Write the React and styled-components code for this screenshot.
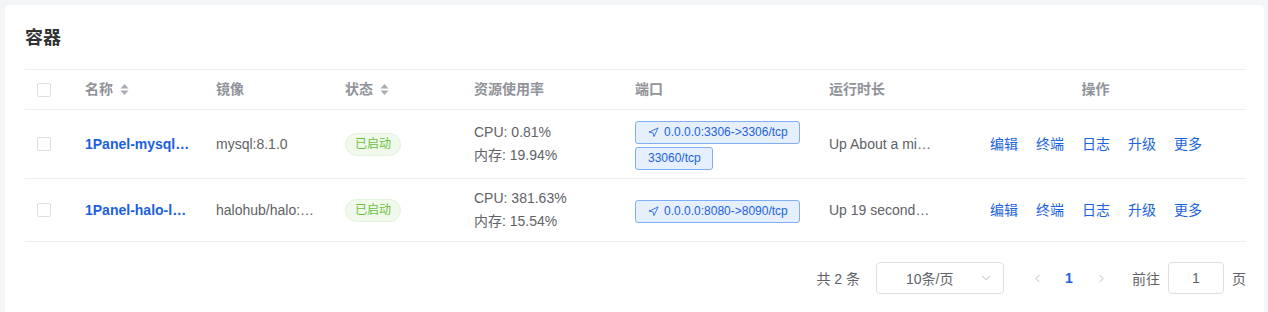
import styled, { createGlobalStyle } from 'styled-components';
import { ChevronDown, ChevronLeft, ChevronRight, Navigation } from 'lucide-react';

const GlobalStyle = createGlobalStyle`
  html, body {
    margin: 0;
    padding: 0;
    background: #f4f5f7;
    font-family: "Liberation Sans", "Noto Sans CJK SC", Arial, sans-serif;
  }
`;

const containers = [
  {
    name: '1Panel-mysql…',
    image: 'mysql:8.1.0',
    cpu: '0.81%',
    mem: '19.94%',
    ports: [{ text: '0.0.0.0:3306->3306/tcp', icon: true }, { text: '33060/tcp' }],
    uptime: 'Up About a mi…',
  },
  {
    name: '1Panel-halo-l…',
    image: 'halohub/halo:…',
    cpu: '381.63%',
    mem: '15.54%',
    ports: [{ text: '0.0.0.0:8080->8090/tcp', icon: true }],
    uptime: 'Up 19 second…',
  },
];

const actions = ['编辑', '终端', '日志', '升级', '更多'];

const SortCaret = () => (
  <svg width="9" height="13" viewBox="0 0 9 13">
    <path d="M4.5 1 L8.5 5.5 L0.5 5.5 Z" fill="#a8abb2" />
    <path d="M4.5 12 L8.5 7.5 L0.5 7.5 Z" fill="#a8abb2" />
  </svg>
);

const App = () => {
  return (
    <>
      <GlobalStyle />
      <Card>
        <Title>容器</Title>
        <Table>
          <Row $header>
            <Cell><Checkbox /></Cell>
            <HeadCell>名称 <SortCaret /></HeadCell>
            <HeadCell>镜像</HeadCell>
            <HeadCell>状态 <SortCaret /></HeadCell>
            <HeadCell>资源使用率</HeadCell>
            <HeadCell>端口</HeadCell>
            <HeadCell>运行时长</HeadCell>
            <HeadCell $center>操作</HeadCell>
          </Row>
          {containers.map((c, i) => (
            <Row key={i}>
              <Cell><Checkbox /></Cell>
              <Cell><NameLink>{c.name}</NameLink></Cell>
              <Cell>{c.image}</Cell>
              <Cell><StatusTag>已启动</StatusTag></Cell>
              <Cell>
                <Lines>
                  <span>CPU: {c.cpu}</span>
                  <span>内存: {c.mem}</span>
                </Lines>
              </Cell>
              <Cell>
                <Ports>
                  {c.ports.map((p, k) => (
                    <PortTag key={k}>
                      {p.icon && <Navigation size={11} strokeWidth={1.8} />}
                      {p.text}
                    </PortTag>
                  ))}
                </Ports>
              </Cell>
              <Cell>{c.uptime}</Cell>
              <Cell>
                <Actions>
                  {actions.map((a) => (
                    <ActionLink key={a}>{a}</ActionLink>
                  ))}
                </Actions>
              </Cell>
            </Row>
          ))}
        </Table>
        <Pagination>
          <Total>共 2 条</Total>
          <Select>
            <span>10条/页</span>
            <ChevronDown size={14} color="#a8abb2" strokeWidth={1.5} />
          </Select>
          <PagerButton><ChevronLeft size={13} strokeWidth={1.5} /></PagerButton>
          <PagerButton $active>1</PagerButton>
          <PagerButton><ChevronRight size={13} strokeWidth={1.5} /></PagerButton>
          <Jumper>
            前往
            <JumpInput>1</JumpInput>
            页
          </Jumper>
        </Pagination>
      </Card>
    </>
  );
};

const Card = styled.div`
  margin: 5px 4px 0 5px;
  padding: 20px 18px 20px 20px;
  background: #fff;
  border-radius: 4px;
  min-height: 290px;
  box-sizing: border-box;
`;

const Title = styled.div`
  font-size: 18px;
  font-weight: 700;
  line-height: 26px;
  color: #303133;
  margin-bottom: 18px;
`;

const Table = styled.div`
  border-top: 1px solid #ebeef5;
`;

const Row = styled.div`
  display: grid;
  grid-template-columns: 48px 131px 129px 129px 161px 194px 128px 1fr;
  border-bottom: 1px solid #ebeef5;
  min-height: ${(p) => (p.$header ? '39px' : '46px')};
  font-size: 14px;
  color: #606266;
`;

const Cell = styled.div`
  display: flex;
  align-items: center;
  padding: 8px 12px;
  line-height: 23px;
  white-space: nowrap;
  overflow: hidden;
`;

const HeadCell = styled(Cell)`
  color: #909399;
  font-weight: 700;
  gap: 7px;
  justify-content: ${(p) => (p.$center ? 'center' : 'flex-start')};
`;

const Checkbox = styled.span`
  display: inline-block;
  width: 12px;
  height: 12px;
  border: 1px solid #dcdfe6;
  border-radius: 2px;
  background: #fff;
`;

const NameLink = styled.span`
  color: #1a5fe0;
  font-weight: 700;
`;

const StatusTag = styled.span`
  display: inline-flex;
  align-items: center;
  height: 21px;
  padding: 0 9px;
  border: 1px solid #e1f3d8;
  border-radius: 12px;
  background: #f0f9eb;
  color: #67c23a;
  font-size: 12px;
`;

const Lines = styled.div`
  display: flex;
  flex-direction: column;
`;

const Ports = styled.div`
  display: flex;
  flex-direction: column;
  align-items: flex-start;
  gap: 3px;
  padding: 3px 0 0;
`;

const PortTag = styled.span`
  display: inline-flex;
  align-items: center;
  gap: 5px;
  height: 21px;
  padding: 0 11px 0 12px;
  border: 1px solid #80aef5;
  border-radius: 3px;
  background: #e6effd;
  color: #1a62e0;
  font-size: 12px;
`;

const Actions = styled.div`
  display: flex;
  gap: 18px;
  padding-left: 33px;
`;

const ActionLink = styled.span`
  color: #1a62e0;
  cursor: pointer;
`;

const Pagination = styled.div`
  display: flex;
  justify-content: flex-end;
  align-items: center;
  margin-top: 20px;
  font-size: 14px;
  color: #606266;
`;

const Total = styled.span`
  margin-right: 16px;
`;

const Select = styled.div`
  display: flex;
  align-items: center;
  justify-content: space-between;
  width: 128px;
  height: 32px;
  box-sizing: border-box;
  padding: 0 10px 0 29px;
  border: 1px solid #dcdfe6;
  border-radius: 4px;
  margin-right: 17px;
`;

const PagerButton = styled.span`
  display: flex;
  align-items: center;
  justify-content: center;
  width: 32px;
  height: 32px;
  color: ${(p) => (p.$active ? '#1a62e0' : '#a8abb2')};
  font-weight: ${(p) => (p.$active ? 700 : 400)};
`;

const Jumper = styled.div`
  display: flex;
  align-items: center;
  gap: 8px;
  margin-left: 15px;
`;

const JumpInput = styled.span`
  display: flex;
  align-items: center;
  justify-content: center;
  width: 56px;
  height: 32px;
  box-sizing: border-box;
  border: 1px solid #dcdfe6;
  border-radius: 4px;
`;

export default App;
